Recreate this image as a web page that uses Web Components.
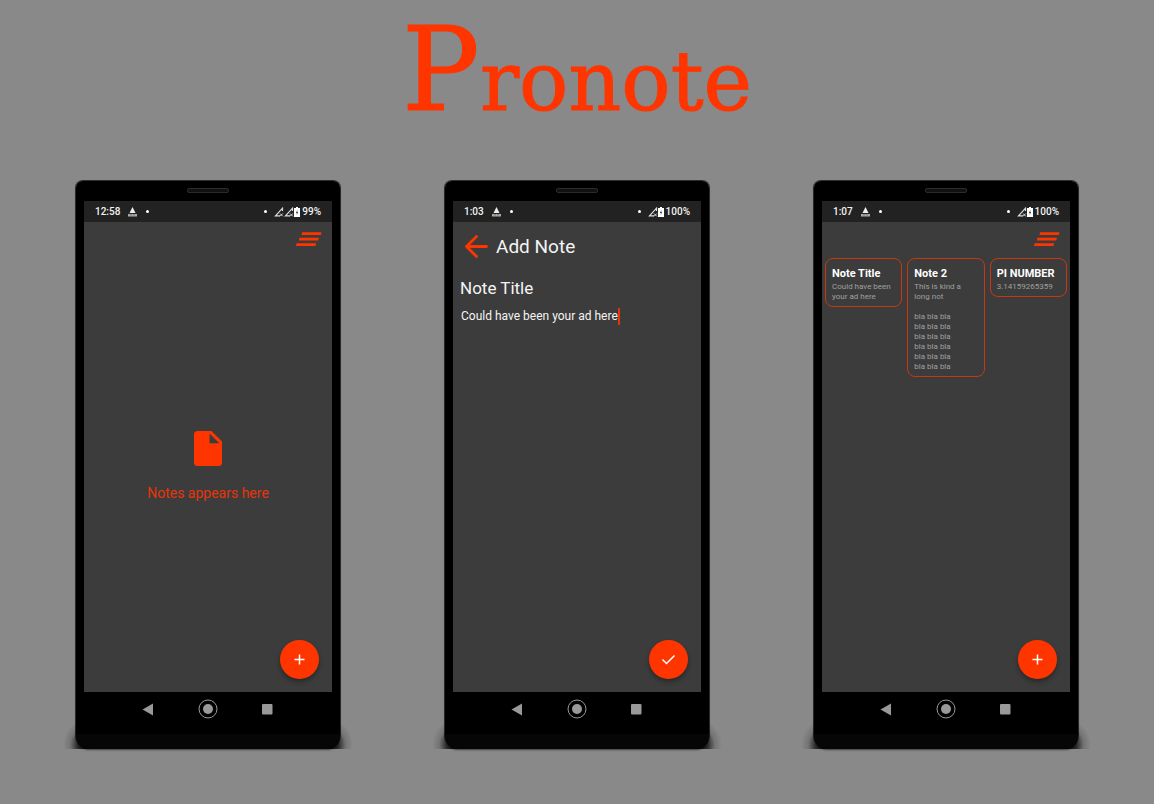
<!DOCTYPE html>
<html lang="en">
<head>
<meta charset="utf-8">
<meta name="viewport" content="width=device-width, initial-scale=1">
<title>Pronote</title>
<style>
  :root { --accent: #ff3500; --surface: #3c3c3c; }
  body { margin: 0; background: #898989; font-family: Roboto, "Liberation Sans", sans-serif; min-height: 100vh; }
</style>
</head>
<body>
<pronote-page>
  <phone-frame time="12:58" battery="99%" signals="2">
    <top-bar></top-bar>
    <empty-state>Notes appears here</empty-state>
    <fab-button icon="plus" label="Add note"></fab-button>
  </phone-frame>
  <phone-frame time="1:03" battery="100%" signals="1">
    <note-editor heading="Add Note" title-text="Note Title" body-text="Could have been your ad here"></note-editor>
    <fab-button icon="check" label="Save note"></fab-button>
  </phone-frame>
  <phone-frame time="1:07" battery="100%" signals="1">
    <top-bar></top-bar>
    <note-grid>
      <note-card><span slot="title">Note Title</span>Could have been your ad here</note-card>
      <note-card><span slot="title">Note 2</span>This is kind a long not

bla bla bla
bla bla bla
bla bla bla
bla bla bla
bla bla bla
bla bla bla</note-card>
      <note-card><span slot="title">PI NUMBER</span>3.14159265359</note-card>
    </note-grid>
    <fab-button icon="plus" label="Add note"></fab-button>
  </phone-frame>
</pronote-page>

<script>
  const define = (name, render) => customElements.define(name, class extends HTMLElement {
    constructor() {
      super();
      this.attachShadow({ mode: "open" });
    }
    connectedCallback() {
      this.shadowRoot.innerHTML = render(this);
    }
  });

  define("pronote-page", () => `
    <style>
      :host { display: block; }
      h1 { margin: 0; padding-top: 14px; height: 112px; margin-bottom: 54px; text-align: center; color: var(--accent);
           font: 400 82px/112px "DejaVu Serif", serif; white-space: nowrap; -webkit-text-stroke: 1px var(--accent); }
      h1::first-letter { font-size: 116px; line-height: 112px; }
      main { display: flex; flex-wrap: wrap; justify-content: center; gap: 56px 103px; padding-bottom: 56px; }
    </style>
    <h1>Pronote</h1>
    <main><slot></slot></main>`);

  define("phone-frame", el => `
    <style>
      :host { display: flex; flex-direction: column; position: relative; isolation: isolate; box-sizing: border-box;
              width: 266px; padding: 0 8px; border: 1px solid #303030; border-bottom-color: #060606;
              border-radius: 8px 8px 14px 14px; }
      :host::before { content: ""; position: absolute; z-index: -2; left: -13px; right: -13px; bottom: -1px; height: 26px;
              background: radial-gradient(ellipse 24px 26px at 100% 85%, #000, #000000b0 40%, #00000028 70%, transparent) 0 0 / 24px 100% no-repeat,
                          radial-gradient(ellipse 24px 26px at 0 85%, #000, #000000b0 40%, #00000028 70%, transparent) 100% 0 / 24px 100% no-repeat; }
      :host::after { content: ""; position: absolute; z-index: -1; inset: 0 0 -1px; border-radius: 7px 7px 13px 13px;
              background: linear-gradient(#000, #000) 0 0 / 100% calc(100% - 15px) no-repeat, #060606; box-shadow: 0 1px 2px #0008; }
      .speaker { height: 20px; display: grid; place-items: start center; }
      .speaker i { box-sizing: border-box; width: 42px; height: 5px; margin-top: 7px; border-radius: 2px; background: #111; border: 1px solid #2b2b2b; }
      .screen { position: relative; height: 470px; background: var(--surface); }
      nav { height: 56px; display: flex; justify-content: center; gap: 37px; padding-top: 6px; box-sizing: border-box; }
      button { border: 0; padding: 0; background: none; width: 22px; height: 22px; }
      svg { display: block; }
    </style>
    <div class="speaker"><i></i></div>
    <status-bar time="${el.getAttribute("time")}" battery="${el.getAttribute("battery")}" signals="${el.getAttribute("signals")}"></status-bar>
    <div class="screen"><slot></slot></div>
    <nav aria-label="System">
      <button aria-label="Back"><svg width="22" height="22"><path d="M4.500 11.500 15 5.500v12z" fill="#999"/></svg></button>
      <button aria-label="Home"><svg width="22" height="22"><circle cx="11" cy="11" r="9" fill="none" stroke="#999"/><circle cx="11" cy="11" r="5" fill="#999"/></svg></button>
      <button aria-label="Recent apps"><svg width="22" height="22"><rect x="6" y="6" width="10.500" height="10.500" rx="1" fill="#999"/></svg></button>
    </nav>`);

  const signal = `<svg width="10" height="10" viewBox="0 0 10 10"><path d="M8.500 4V1.200L1.500 8.800H6" fill="none" stroke="#ddd" stroke-width="1.200"/><path d="M6 6.500 8.800 9.300M8.800 6.500 6 9.300" stroke="#ddd"/></svg>`;

  define("status-bar", el => `
    <style>
      :host { display: flex; align-items: center; height: 21px; padding: 0 11px; background: #222; color: #f2f2f2;
              font-size: 10px; font-weight: 500; line-height: 21px; }
      .app { margin-left: 8px; }
      i { width: 3px; height: 3px; border-radius: 50%; background: #fff; margin-left: 9px; }
      .right { display: flex; align-items: center; margin-left: auto; }
      .right i { margin-right: 7px; }
      .right span { margin-left: 2px; }
      svg { display: block; }
    </style>
    <span>${el.getAttribute("time")}</span>
    <svg class="app" width="9" height="10" viewBox="0 0 9 10"><path d="M4.500 0 7.500 6h-6z" fill="#eee"/><path d="M0 7h9v2.500H0z" fill="#aaa"/><path d="M3 7v1.500M6 7v1.500" stroke="#444" stroke-width=".7"/></svg>
    <i></i>
    <div class="right">
      <i></i>
      ${signal.repeat(Number(el.getAttribute("signals")))}
      <svg width="6" height="10" viewBox="0 0 6 10"><path d="M2 0h2v1h2v9H0V1h2z" fill="#fff"/><path d="M3.300 3 2 6h.8v2L4 5h-.7z" fill="#222"/></svg>
      <span>${el.getAttribute("battery")}</span>
    </div>`);

  define("top-bar", () => `
    <style>
      :host { display: flex; justify-content: flex-end; padding: 9px 10px 0; height: 27px; }
      button { border: 0; padding: 0; background: none; width: 26px; height: 16px; }
      svg { display: block; }
    </style>
    <button aria-label="Menu"><svg width="26" height="16" viewBox="0 0 26 16" fill="var(--accent)"><path d="M6 1.200h19.500l-.6 2.800H5.500zM3.400 6.700h19.500l-.6 2.800H3zM.6 12.200h19.500l-.6 2.800H0z"/></svg></button>`);

  define("empty-state", () => `
    <style>
      :host { display: flex; flex-direction: column; align-items: center; padding-top: 173px; color: #e8340a;
              font-size: 14px; line-height: 20px; }
      svg { display: block; margin-bottom: 17px; }
    </style>
    <svg width="28" height="35" viewBox="0 0 28 35"><path fill="var(--accent)" fill-rule="evenodd" d="M3.500 0H17.500L28 10.500V31.500Q28 35 24.500 35H3.500Q0 35 0 31.500V3.500Q0 0 3.500 0ZM15.500 2.600V12.200H25.300Z"/></svg>
    <slot></slot>`);

  define("fab-button", el => {
    const shape = el.getAttribute("icon") === "check" ? "M13.500 19.500 17.500 23.500 25.500 15.500" : "M19.500 14.500v10M14.500 19.500h10";
    return `
    <style>
      :host { position: absolute; right: 13px; bottom: 13px; }
      button { display: block; width: 39px; height: 39px; padding: 0; border: 0; border-radius: 50%; background: var(--accent);
               box-shadow: 0 3px 5px #0005; }
      svg { display: block; }
    </style>
    <button aria-label="${el.getAttribute("label")}"><svg width="39" height="39" fill="none" stroke="#fff" stroke-width="1.500"><path d="${shape}"/></svg></button>`;
  });

  define("note-editor", el => `
    <style>
      :host { display: block; padding: 12px 7px 0; color: #f4f4f4; }
      header { display: flex; align-items: center; gap: 8px; padding-left: 5px; }
      button { border: 0; padding: 0; background: none; }
      svg { display: block; }
      h2 { margin: 0; font-size: 19px; line-height: 26px; font-weight: 400; }
      input { display: block; box-sizing: border-box; border: 0; padding: 0; margin: 0; background: none; color: inherit; font-family: inherit; outline: 0; }
      .title { width: 100%; height: 24px; margin-top: 16px; font-size: 17px; }
      .line { display: flex; align-items: center; margin-top: 7px; padding-left: 1px; }
      .body { field-sizing: content; height: 18px; font-size: 12px; caret-color: var(--accent); }
      .caret { width: 2px; height: 17px; background: #e8340a; }
    </style>
    <header>
      <button aria-label="Back"><svg width="23" height="24" viewBox="0 0 23 24"><path d="M11.500 1.500 1.500 11.500 11.500 21.500M1.500 11.500H21.500" fill="none" stroke="var(--accent)" stroke-width="2.800" stroke-linecap="round" stroke-linejoin="round"/></svg></button>
      <h2>${el.getAttribute("heading")}</h2>
    </header>
    <input class="title" aria-label="Title" value="${el.getAttribute("title-text")}">
    <div class="line"><input class="body" aria-label="Note" value="${el.getAttribute("body-text")}"><span class="caret"></span></div>`);

  define("note-grid", () => `
    <style>
      :host { display: grid; grid-template-columns: repeat(3, minmax(0, 1fr)); align-items: start; gap: 5px; padding: 0 3px; }
    </style>
    <slot></slot>`);

  define("note-card", () => `
    <style>
      :host { display: block; border: 1px solid #c8380f; border-radius: 8px; padding: 7px 6px 4px; }
      h3 { margin: 0; color: #fff; font-size: 11px; line-height: 16px; font-weight: 700; white-space: nowrap; }
      p { margin: 0; color: #a0a0a0; font-size: 8px; line-height: 10px; white-space: pre-line; }
    </style>
    <h3><slot name="title"></slot></h3>
    <p><slot></slot></p>`);
</script>
</body>
</html>
